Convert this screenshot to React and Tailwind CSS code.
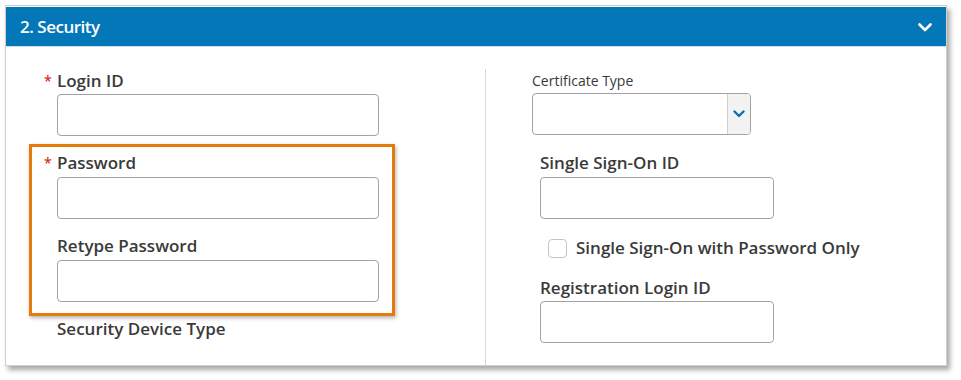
import React from "react";

const font = { fontFamily: '"Open Sans", "Liberation Sans", sans-serif' };

function Input({ w = "w-[322px]" }) {
  return <div className={`${w} h-[42px] rounded-[4px] border border-[#a3a3a3] bg-white`} />;
}

function Label({ children, req, className = "" }) {
  return (
    <div className={`relative h-[20px] text-[17px] leading-[20px] font-semibold text-[#3a3a3a] ${className}`}>
      {req && <span className="absolute left-[-13px] top-[0px] text-[#d9312b] text-[14px]">*</span>}
      {children}
    </div>
  );
}

export default function App() {
  return (
    <div className="w-[961px] h-[380px] bg-white pt-[5px] pl-[5px]" style={font}>
      <div className="w-[942px] h-[361px] border border-[#cfcfcf] bg-white shadow-[3px_4px_5px_rgba(0,0,0,0.35)] flex flex-col">
        <div className="h-[40px] mt-px bg-[#0377b7] border-b border-[#cfe3ef] flex items-center justify-between pl-[14px] pr-[14px]">
          <span className="text-white text-[17px] font-semibold tracking-[-0.5px]">2. Security</span>
          <svg width="14" height="9" viewBox="0 0 14 9" className="mt-[2px]">
            <polyline points="1.5,1.5 7,7 12.5,1.5" fill="none" stroke="white" strokeWidth="2.6" strokeLinecap="round" strokeLinejoin="round" />
          </svg>
        </div>
        <div className="flex flex-1">
          <div className="w-[479px] pt-[24px]">
            <div className="pl-[51px]">
              <Label req>Login ID</Label>
              <div className="mt-[3px]"><Input /></div>
            </div>
            <div className="ml-[23px] mt-[8px] w-[366px] border-[3px] border-[#e47c0c] shadow-[1px_2px_4px_rgba(0,0,0,0.3)] pl-[25px] pt-[6px] pb-[11px]">
              <Label req>Password</Label>
              <div className="mt-[4px]"><Input /></div>
              <Label className="mt-[17px]">Retype Password</Label>
              <div className="mt-[4px]"><Input /></div>
            </div>
            <div className="pl-[51px] mt-[3px]">
              <Label>Security Device Type</Label>
            </div>
          </div>
          <div className="mt-[22px] border-l border-[#d8d8d8] flex-1 pl-[46px]">
            <div className="mt-[3px] h-[18px] text-[14px] leading-[18px] text-[#3a3a3a]">Certificate Type</div>
            <div className="mt-[3px] w-[219px] h-[42px] rounded-[4px] border border-[#a3a3a3] bg-white flex justify-end overflow-hidden">
              <div className="w-[23px] h-full bg-[#f2f2f2] border-l border-[#cfcfcf] flex items-center justify-center">
                <svg width="12" height="8" viewBox="0 0 12 8">
                  <polyline points="1.5,1.5 6,6 10.5,1.5" fill="none" stroke="#0d6fae" strokeWidth="2.4" strokeLinecap="round" strokeLinejoin="round" />
                </svg>
              </div>
            </div>
            <div className="pl-[8px]">
              <Label className="mt-[18px]">Single Sign-On ID</Label>
              <div className="mt-[4px]"><Input w="w-[234px]" /></div>
              <div className="mt-[19px] flex items-center pl-[8px]">
                <div className="w-[19px] h-[19px] rounded-[4px] border border-[#c4c4c4] bg-white" />
                <span className="ml-[9px] text-[17px] leading-[20px] font-semibold text-[#3a3a3a]">Single Sign-On with Password Only</span>
              </div>
              <Label className="mt-[20px]">Registration Login ID</Label>
              <div className="mt-[3px]"><Input w="w-[234px]" /></div>
            </div>
          </div>
        </div>
      </div>
    </div>
  );
}
